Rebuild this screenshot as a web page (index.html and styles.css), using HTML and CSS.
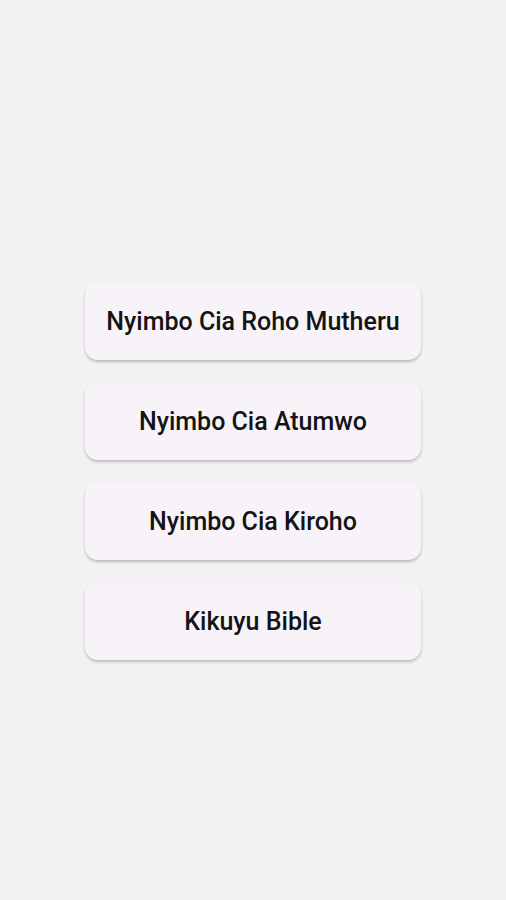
FILE: index.html
```html
<!DOCTYPE html>
<html lang="en">
<head>
  <meta charset="UTF-8" />
  <title>Nyimbo</title>
  <link rel="stylesheet" href="styles.css">
</head>
<body>
  <div id="menu">
    <button class="menu-btn">Nyimbo Cia Roho Mutheru</button>
    <button class="menu-btn">Nyimbo Cia Atumwo</button>
    <button class="menu-btn">Nyimbo Cia Kiroho</button>
    <button class="menu-btn">Kikuyu Bible</button>
  </div>
</body>
</html>
```

FILE: styles.css
```css
html, body {
  margin: 0;
  padding: 0;
  background: #f2f2f2;
  height: 100%;
  font-family: Roboto, "Noto Sans", sans-serif;
}

#menu {
  display: flex;
  flex-direction: column;
  align-items: center;
  gap: 22px;
  padding-top: 282px;
}

.menu-btn {
  width: 336px;
  height: 78px;
  border: none;
  border-radius: 13px;
  background: #f7f3f8;
  color: #141414;
  font-family: Roboto, "Noto Sans", sans-serif;
  font-size: 25px;
  font-weight: 500;
  box-shadow: 0 2px 3px rgba(0, 0, 0, 0.22);
  cursor: pointer;
}
```
